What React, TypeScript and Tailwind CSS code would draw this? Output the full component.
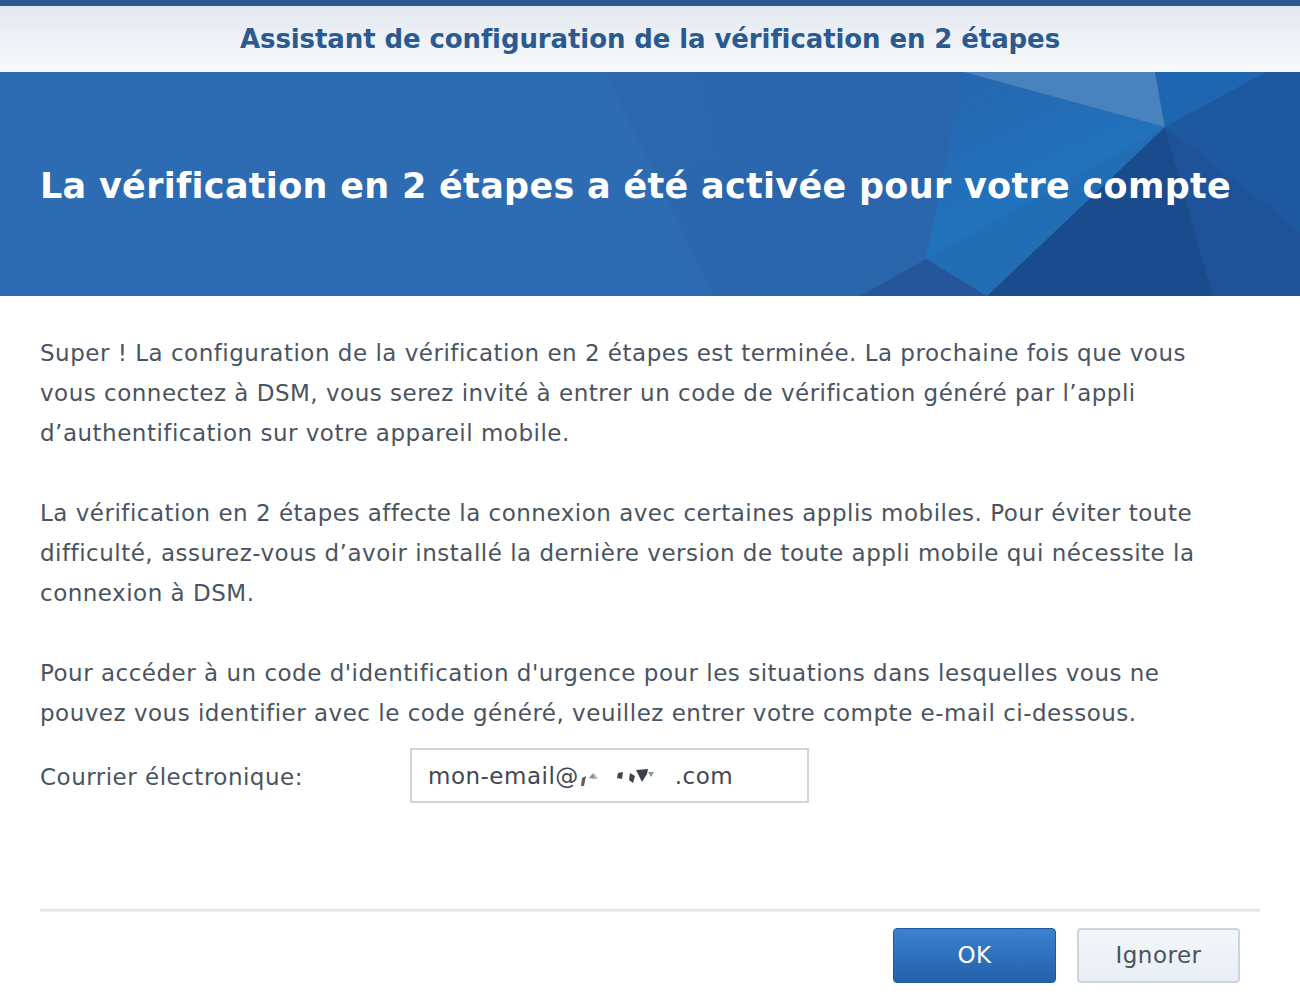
import React from "react";

function BannerArt() {
  return (
    <svg className="absolute inset-0 w-full h-full" viewBox="0 0 1300 224" preserveAspectRatio="none">
      <defs>
        <linearGradient id="g1" x1="0" y1="0" x2="1" y2="1">
          <stop offset="0" stopColor="#2a65ab" />
          <stop offset="1" stopColor="#2a62a6" />
        </linearGradient>
        <linearGradient id="bright" x1="0" y1="0" x2="0.6" y2="1">
          <stop offset="0" stopColor="#2566ae" />
          <stop offset="1" stopColor="#1f7ac6" />
        </linearGradient>
      </defs>
      <polygon points="605,0 1300,0 1300,224 713,224" fill="url(#g1)" opacity="0.6" />
      <polygon points="700,0 964,0 1165,55 926,187 860,224 760,224" fill="#2b66ad" opacity="0.7" />
      <polygon points="964,0 1165,55 926,187" fill="url(#bright)" opacity="0.9" />
      <polygon points="964,0 1155,0 1165,55" fill="#4b86bf" opacity="0.9" />
      <polygon points="1155,0 1266,0 1165,55" fill="#1f66b0" />
      <polygon points="1266,0 1300,0 1300,224 1213,224 1165,55" fill="#1d58a0" />
      <polygon points="1165,55 1213,224 987,224" fill="#1a4b8c" />
      <polygon points="1165,55 987,224 926,187" fill="#2170b8" opacity="0.8" />
      <polygon points="860,224 926,187 987,224" fill="#25569a" />
      <polygon points="1165,55 1300,160 1300,224 1213,224" fill="#1f5399" opacity="0.8" />
    </svg>
  );
}

function Redacted() {
  return (
    <svg width="94" height="24" viewBox="0 0 94 24" className="mx-[1px]">
      <polygon points="2,14 6,12 4,22 1,22" fill="#5a6068" />
      <polygon points="9,14 13,9 15,15" fill="#8a9098" />
      <polygon points="14,9 18,15 14,15" fill="#b5b9be" />
      <polygon points="38,9 43,8 42,15 37,14" fill="#3f454c" />
      <polygon points="50,9 55,12 53,19 49,16" fill="#3f454c" />
      <polygon points="56,6 68,5 67,10 62,18 59,12" fill="#3b4148" />
      <polygon points="68,8 74,8 71,13" fill="#8e9399" />
    </svg>
  );
}

export default function App() {
  const body = "font-['DejaVu_Sans','Verdana',sans-serif]";
  return (
    <div className={`w-[1300px] h-[999px] bg-white flex flex-col overflow-hidden ${body}`}>
      <div className="h-[6px] bg-[#2b5a8e]" />
      <div className="h-[66px] bg-gradient-to-b from-[#e3e8f0] to-[#f9fafc] flex items-center justify-center">
        <div className="font-bold text-[26px] text-[#2b5a90] tracking-[-0.1px] leading-none">
          Assistant de configuration de la vérification en 2 étapes
        </div>
      </div>
      <div className="relative h-[224px] bg-[#2d6cb3] overflow-hidden flex items-center">
        <BannerArt />
        <div className="relative pl-[40px] pt-[4px] font-bold text-[35px] tracking-[0.3px] text-white leading-none whitespace-nowrap">
          La vérification en 2 étapes a été activée pour votre compte
        </div>
      </div>
      <div className="px-[40px] pt-[37px] text-[23px] tracking-[0.5px] leading-[40px] text-[#4a5461] whitespace-nowrap">
        <p>
          Super ! La configuration de la vérification en 2 étapes est terminée. La prochaine fois que vous
          <br />
          vous connectez à DSM, vous serez invité à entrer un code de vérification généré par l’appli
          <br />
          d’authentification sur votre appareil mobile.
        </p>
        <p className="mt-[40px]">
          La vérification en 2 étapes affecte la connexion avec certaines applis mobiles. Pour éviter toute
          <br />
          difficulté, assurez-vous d’avoir installé la dernière version de toute appli mobile qui nécessite la
          <br />
          connexion à DSM.
        </p>
        <p className="mt-[40px]">
          Pour accéder à un code d'identification d'urgence pour les situations dans lesquelles vous ne
          <br />
          pouvez vous identifier avec le code généré, veuillez entrer votre compte e-mail ci-dessous.
        </p>
        <div className="mt-[15px] flex items-center">
          <div className="w-[370px] pt-[3px]">Courrier électronique:</div>
          <div className="w-[399px] h-[55px] border-2 border-[#cdd6e0] flex items-center px-[16px] text-[#3f4852]">
            <span>mon-email@</span>
            <Redacted />
            <span>.com</span>
          </div>
        </div>
      </div>
      <div className="mx-[40px] mt-[106px] h-[3px] bg-gradient-to-b from-[#dcdfe2] to-[#f2f3f4]" />
      <div className="flex justify-end px-[60px] pt-[16px] gap-[21px]">
        <button className="w-[163px] h-[55px] rounded-[4px] border border-[#1f58a0] bg-gradient-to-b from-[#3b82cf] to-[#2361ab] text-white text-[23px] tracking-[0.5px]">
          OK
        </button>
        <button className="w-[163px] h-[55px] rounded-[4px] border-2 border-[#cbd4df] bg-gradient-to-b from-[#f4f7fa] to-[#e9eef4] text-[#4a5461] text-[23px] tracking-[0.5px]">
          Ignorer
        </button>
      </div>
    </div>
  );
}
